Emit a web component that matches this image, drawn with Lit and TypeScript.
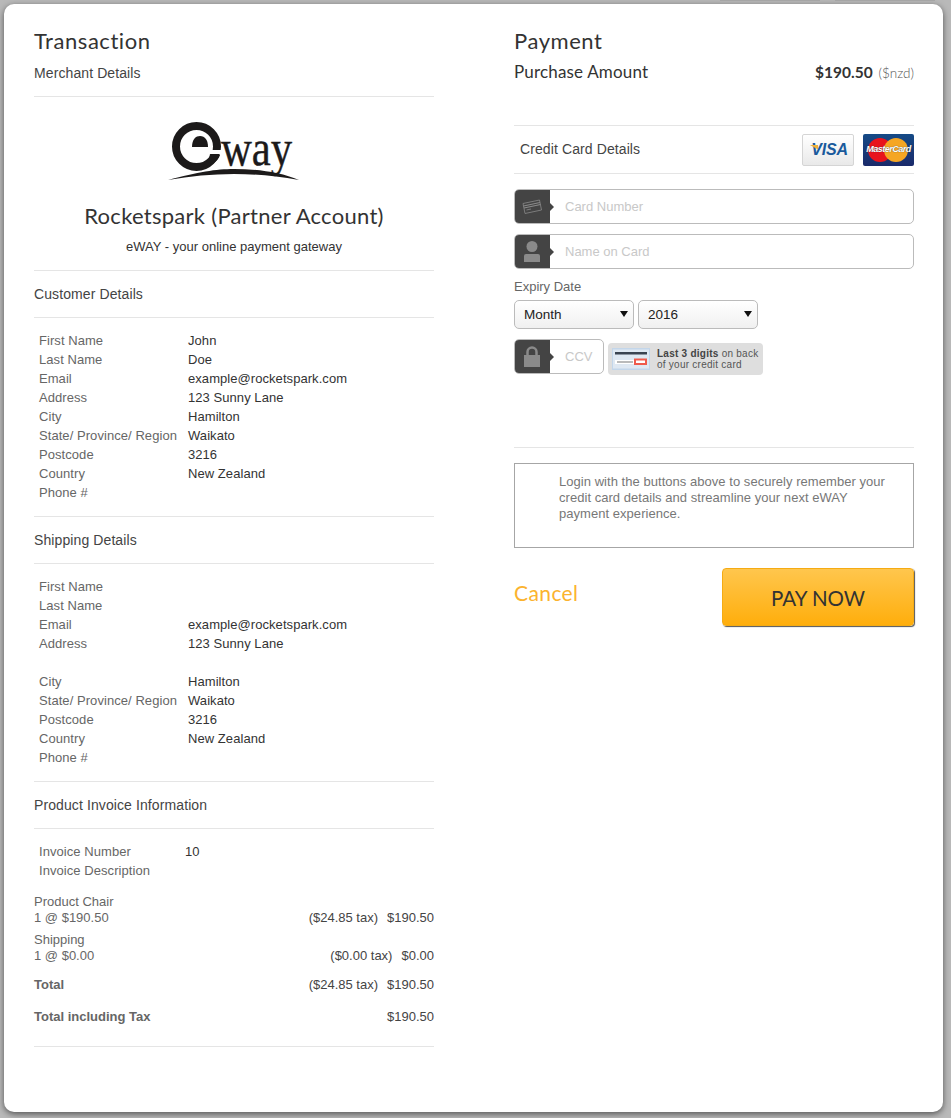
import { LitElement, html, css, svg } from "lit";
import { customElement } from "lit/decorators.js";

const customer: [string, string][] = [
  ["First Name", "John"], ["Last Name", "Doe"], ["Email", "example@rocketspark.com"],
  ["Address", "123 Sunny Lane"], ["City", "Hamilton"], ["State/ Province/ Region", "Waikato"],
  ["Postcode", "3216"], ["Country", "New Zealand"], ["Phone #", ""],
];
const shipping: [string, string][] = [
  ["First Name", ""], ["Last Name", ""], ["Email", "example@rocketspark.com"],
  ["Address", "123 Sunny Lane"], ["", ""], ["City", "Hamilton"], ["State/ Province/ Region", "Waikato"],
  ["Postcode", "3216"], ["Country", "New Zealand"], ["Phone #", ""],
];

const logo = svg`<svg class="logo" width="132" height="64" viewBox="0 0 132 64">
  <text transform="translate(53 45) scale(.855 1)" font-family="Liberation Serif, serif" font-size="50" fill="#1c1a1a" stroke="#1c1a1a" stroke-width=".4">way</text>
  <path d="M0 60 C30 52 48 49 66 49 C88 49 112 52 131 60 C108 56 88 54 66 54 C44 54 22 56 0 60Z" fill="#1c1a1a"/>
  <circle cx="28.500" cy="26.500" r="20.500" fill="#fff" stroke="#1c1a1a" stroke-width="8"/>
  <path d="M24 27 C24 19 28 16 32 16 C37 16 40 20 40 27Z" fill="#1c1a1a"/>
  <rect x="42" y="30" width="12" height="4" fill="#fff"/>
  <path d="M52 35 C50 42 42 47 33 47 C38 44 41 40 42 34Z" fill="#1c1a1a"/>
</svg>`;

const cardIcon = svg`<svg width="20" height="16" viewBox="0 0 20 16" fill="none" stroke="#8a8a8a" stroke-width="0.8">
  <path d="M1 4.500 L17.500 1 L19.500 11 L3 14.500Z"/><path d="M1.500 7 L18 3.500M2 9 L18.500 5.500" stroke-width="1.200"/><path d="M4.500 11 L9 10"/>
</svg>`;
const personIcon = svg`<svg width="16" height="21" viewBox="0 0 16 21" fill="#8a8a8a">
  <circle cx="8" cy="5.500" r="5.500"/><path d="M0 15 Q0 13 2 13 H14 Q16 13 16 15 V21 H0Z"/>
</svg>`;
const lockIcon = svg`<svg width="16" height="21" viewBox="0 0 16 21">
  <path d="M3.500 10 V6 a4.500 4.500 0 0 1 9 0 V10" fill="none" stroke="#8a8a8a" stroke-width="2.500"/><rect y="9" width="16" height="12" fill="#8a8a8a"/>
</svg>`;
const ccvCard = svg`<svg width="38" height="22" viewBox="0 0 38 22">
  <rect width="38" height="22" fill="#c3d6ea"/><rect x="1" y="1.500" width="36" height="19" fill="#dfe8f2"/>
  <rect x="3" y="4" width="32" height="2.500" fill="#3a4350"/>
  <rect x="3" y="12" width="20" height="4" fill="#fff"/><rect x="5" y="13.500" width="16" height="1" fill="#777"/>
  <rect x="22" y="10.500" width="13" height="6.500" fill="#ef5a4c"/><rect x="24" y="12.500" width="9" height="2.500" fill="#fff"/>
</svg>`;

@customElement("app-root")
export class AppRoot extends LitElement {
  static styles = css`
    :host { display: block; box-sizing: border-box; height: 1118px; padding: 4px 8px 6px 4px; background: #b9b9b9; position: relative; overflow: hidden;
      font: 13px/19px "Liberation Sans", Arial, sans-serif; color: #444; }
    .tab { position: absolute; top: 0; height: 1px; background: #a5a5a5; }
    .tab.a { left: 720px; width: 100px; } .tab.b { left: 835px; width: 100px; }
    .card { box-sizing: border-box; height: 1108px; background: #fff; border-radius: 10px; box-shadow: 0 2px 6px rgba(0,0,0,.55);
      padding: 0 29px 0 30px; display: grid; grid-template-columns: 400px 400px; column-gap: 80px; align-content: start; }
    .head { font: 400 22px/28px Lato, sans-serif; color: #333; margin: 23px 0 0; letter-spacing: .55px; }
    hr { border: 0; border-top: 1px solid #e5e5e5; margin: 0; }
    .sub { height: 46px; line-height: 46px; font-size: 14px; letter-spacing: .1px; }
    .merchant { height: 22px; margin-top: 7px; margin-bottom: 12px; line-height: 22px; font-size: 14px; letter-spacing: .1px; }
    .brand { text-align: center; height: 173px; box-sizing: border-box; padding-top: 23px; }
    .logo { display: block; margin: 0 auto; }
    .brand h2 { font: 400 22px/26px Lato, sans-serif; color: #333; margin: 19px 0 0; letter-spacing: .28px; }
    .tag { margin-top: 8px; color: #333; }
    .rows { padding: 13px 0 14px 5px; }
    .row { display: grid; grid-template-columns: 149px 1fr; height: 19px; white-space: nowrap; letter-spacing: .06px; }
    .row span:first-child { color: #666; } .row span:last-child { color: #333; }
    .rows.inv { padding-bottom: 14px; } .rows.inv .row { grid-template-columns: 146px 1fr; }
    .line { display: flex; justify-content: space-between; line-height: 16px; color: #666; }
    .r { display: flex; gap: 9px; color: #444; }
    .item { margin-bottom: 6px; }
    .mt13 { margin-top: 13px; }
    .mt16 { margin-top: 16px; margin-bottom: 21px; }
    .bold { font-weight: 700; color: #666; }
    .purchase { display: flex; justify-content: space-between; align-items: baseline; margin-top: 5px; height: 47px; font: 17px/24px Lato, sans-serif; color: #333; letter-spacing: .17px; }
    .price { font-weight: 700; font-size: 15.500px; letter-spacing: 0; }
    .price small { font-weight: 300; font-size: 13.500px; color: #555; margin-left: 2px; letter-spacing: 0; }
    .rule { margin-top: 18px; }
    .cc { display: flex; align-items: center; justify-content: space-between; height: 47px; padding-left: 6px; color: #444; font-size: 14px; letter-spacing: .1px; }
    .brands { display: flex; gap: 9px; }
    .visa, .mc { box-sizing: border-box; height: 32px; border-radius: 2px; display: flex; align-items: center; justify-content: center; position: relative; overflow: hidden; }
    .visa { width: 52px; border: 1px solid #d5d5d5; background: linear-gradient(#fff, #e9e9e9); color: #1a5a9c; font: italic 700 16px/1 "Liberation Sans", sans-serif; letter-spacing: -.2px; padding-left: 3px; }
    .visa::before { content: ""; position: absolute; left: 6px; top: 10px; width: 9px; height: 5px; background: #eeb23c; clip-path: polygon(0 0, 100% 0, 100% 100%); }
    .mc { width: 51px; background: linear-gradient(#154a86, #1a2a6a); color: #fff; font: italic 700 9px/1 "Liberation Sans", sans-serif; }
    .mc i { position: absolute; top: 4px; width: 24px; height: 24px; border-radius: 50%; }
    .mc .red { left: 5px; background: #e8141c; } .mc .org { right: 6px; background: #f5a623; }
    .mc b { position: relative; letter-spacing: -.5px; text-shadow: 0 0 1px #333; }
    .field { display: flex; height: 35px; box-sizing: border-box; border: 1px solid #bbb; border-radius: 5px; overflow: hidden; }
    .field + .field { margin-top: 10px; }
    .fields { margin-top: 15px; }
    .ico { width: 36px; flex: none; background: #444; display: flex; align-items: center; justify-content: center; margin: -1px 0 -1px -1px; position: relative; border-radius: 5px 0 0 5px; }
    .field input { flex: 1; min-width: 0; border: 0; outline: 0; background: transparent; font: 13px "Liberation Sans", sans-serif; padding: 0 0 0 15px; }
    .field input::placeholder { color: #c8c8c8; opacity: 1; }
    .notch { width: 0; height: 0; flex: none; align-self: center; border: 4px solid transparent; border-left-color: #444; border-right-width: 0; }
    .field .notch + input { padding-left: 11px; }
    .expiry { margin-top: 8px; color: #666; }
    .selects { display: flex; gap: 4px; margin-top: 4px; }
    .sel { position: relative; height: 29px; width: 120px; box-sizing: border-box; border: 1px solid #bbb; border-radius: 5px; background: linear-gradient(#fff, #f0f0f0); color: #222; line-height: 27px; padding-left: 9px; font-size: 13.500px; }
    .sel::after { content: ""; position: absolute; right: 5px; top: 10px; border: 4px solid transparent; border-top: 6px solid #111; border-bottom: 0; }
    .ccvrow { display: flex; margin-top: 10px; align-items: flex-start; gap: 4px; }
    .ccv { width: 90px; flex: none; }
    .help { display: flex; align-items: center; gap: 7px; width: 155px; height: 32px; box-sizing: border-box; padding-left: 4px; margin-top: 4px; background: #dedede; border-radius: 4px; font-size: 10px; line-height: 11px; color: #555; white-space: nowrap; letter-spacing: .25px; }
    .help b { color: #444; }
    .div2 { margin-top: 72px; }
    .login { box-sizing: border-box; height: 85px; margin-top: 15px; border: 1px solid #a6a6a6; padding: 10px 20px 0 44px; color: #777; line-height: 16px; letter-spacing: .04px; }
    .actions { display: flex; justify-content: space-between; margin-top: 20px; }
    .cancel { font: 21px/24px Lato, sans-serif; color: #fbb32e; margin-top: 13px; letter-spacing: .4px; }
    .pay { box-sizing: border-box; width: 192px; height: 58px; border: 1px solid #f5ab13; border-radius: 4px; background: linear-gradient(#ffc64d, #ffae0c); box-shadow: 1px 1px 1px #555; font: 20.500px/58px Lato, sans-serif; color: #333; text-align: center; padding: 0; }
  `;

  private rows(items: [string, string][], cls = "") {
    return html`<div class="rows ${cls}">${items.map(([a, b]) => html`<div class="row"><span>${a}</span><span>${b}</span></div>`)}</div>`;
  }

  render() {
    return html`
      <div class="tab a"></div><div class="tab b"></div>
      <div class="card">
        <div>
          <h1 class="head">Transaction</h1>
          <div class="merchant">Merchant Details</div>
          <hr />
          <div class="brand">
            ${logo}
            <h2>Rocketspark (Partner Account)</h2>
            <div class="tag">eWAY - your online payment gateway</div>
          </div>
          <hr />
          <div class="sub">Customer Details</div>
          <hr />
          ${this.rows(customer)}
          <hr />
          <div class="sub">Shipping Details</div>
          <hr />
          ${this.rows(shipping)}
          <hr />
          <div class="sub">Product Invoice Information</div>
          <hr />
          ${this.rows([["Invoice Number", "10"], ["Invoice Description", ""]], "inv")}
          <div class="item"><div class="line">Product Chair</div>
            <div class="line"><span>1 @ $190.50</span><span class="r"><span>($24.85 tax)</span><span>$190.50</span></span></div></div>
          <div class="item"><div class="line">Shipping</div>
            <div class="line"><span>1 @ $0.00</span><span class="r"><span>($0.00 tax)</span><span>$0.00</span></span></div></div>
          <div class="line mt13"><span class="bold">Total</span><span class="r"><span>($24.85 tax)</span><span>$190.50</span></span></div>
          <div class="line mt16"><span class="bold">Total including Tax</span><span class="r">$190.50</span></div>
          <hr />
        </div>
        <div>
          <h1 class="head">Payment</h1>
          <div class="purchase"><span>Purchase Amount</span><span class="price">$190.50 <small>($nzd)</small></span></div>
          <hr class="rule" />
          <div class="cc"><span>Credit Card Details</span>
            <div class="brands">
              <div class="visa">VISA</div>
              <div class="mc"><i class="red"></i><i class="org"></i><b>MasterCard</b></div>
            </div>
          </div>
          <hr />
          <div class="fields">
            <div class="field"><div class="ico">${cardIcon}</div><div class="notch"></div><input placeholder="Card Number" /></div>
            <div class="field"><div class="ico">${personIcon}</div><div class="notch"></div><input placeholder="Name on Card" /></div>
          </div>
          <div class="expiry">Expiry Date</div>
          <div class="selects"><div class="sel">Month</div><div class="sel">2016</div></div>
          <div class="ccvrow">
            <div class="field ccv"><div class="ico">${lockIcon}</div><div class="notch"></div><input placeholder="CCV" /></div>
            <div class="help">${ccvCard}<span><b>Last 3 digits</b> on back<br />of your credit card</span></div>
          </div>
          <hr class="div2" />
          <div class="login">Login with the buttons above to securely remember your credit card details and streamline your next eWAY payment experience.</div>
          <div class="actions"><div class="cancel">Cancel</div><button class="pay">PAY NOW</button></div>
        </div>
      </div>
    `;
  }
}
